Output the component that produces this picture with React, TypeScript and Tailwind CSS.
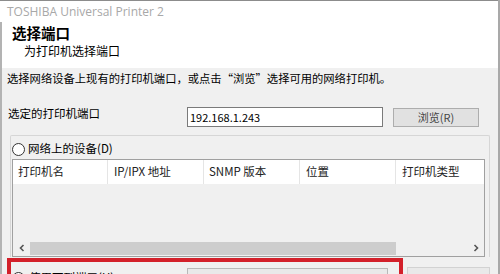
import React from 'react';

const cols = [
  { label: '打印机名', w: 'w-[95px]', pl: 'pl-[5px]' },
  { label: 'IP/IPX 地址', w: 'w-[96px]', pl: 'pl-[6px]' },
  { label: 'SNMP 版本', w: 'w-[96px]', pl: 'pl-[5px]' },
  { label: '位置', w: 'w-[96px]', pl: 'pl-[6px]' },
  { label: '打印机类型', w: 'flex-1', pl: 'pl-[6px]' },
];

const Radio: React.FC<{ checked?: boolean }> = ({ checked }) => (
  <span className="flex h-[13px] w-[13px] shrink-0 items-center justify-center rounded-full border border-[#333] bg-white">
    {checked && <span className="h-[7px] w-[7px] rounded-full bg-[#222]" />}
  </span>
);

const Chevron: React.FC<{ dir: 'left' | 'right' }> = ({ dir }) => (
  <svg width="8" height="8" viewBox="0 0 8 8">
    <path
      d={dir === 'left' ? 'M5.5 1 L2.5 4 L5.5 7' : 'M2.5 1 L5.5 4 L2.5 7'}
      fill="none"
      stroke="#555"
      strokeWidth="1.6"
    />
  </svg>
);

export default function App() {
  return (
    <div className="relative h-[274px] w-[500px] overflow-hidden border-r-2 border-[#a9a9a9] bg-[#f0f0f0] font-['Noto_Sans_CJK_SC',sans-serif] text-[11.5px] text-black">
      {/* title bar */}
      <div className="flex h-[22px] items-center border-t border-[#8c8c8c] bg-white pl-[7px] font-['Open_Sans',sans-serif] text-[12px] text-[#a8a8a8]">
        TOSHIBA Universal Printer 2
      </div>

      <div className="border-l-2 border-[#b3b3b3]">
        {/* header */}
        <div className="h-[46px] bg-white pt-[1px]">
          <div className="pl-[10px] text-[14.5px] font-bold leading-[20px]">选择端口</div>
          <div className="pl-[22px] text-[12px] leading-[16px]">为打印机选择端口</div>
        </div>

        {/* body */}
        <div className="pt-[1px]">
          <div className="pl-[5px] text-[11.3px] leading-[18px]">
            选择网络设备上现有的打印机端口，或点击“浏览”选择可用的网络打印机。
          </div>

          <div className="mt-[20px] flex h-[20px] items-start pl-[6px]">
            <div className="-mt-[2px] w-[179px] leading-[16px]">选定的打印机端口</div>
            <div className="flex h-[20px] w-[196px] items-center border border-[#7a7a7a] bg-white pl-[2px] text-[11px]">
              192.168.1.243
            </div>
            <div className="ml-[10px] mt-[1px] flex h-[19px] w-[86px] items-center justify-center border border-[#adadad] bg-[#e1e1e1] text-[11px] text-[#444]">
              浏览(R)
            </div>
          </div>

          {/* group box */}
          <div className="ml-[8px] mt-[8px] w-[480px] rounded-t-[2px] border border-b-0 border-[#d6d6d6]">
            <div className="flex h-[23px] items-center gap-[3px] pl-[1px] pt-[3px]">
              <Radio />
              <span>网络上的设备(D)</span>
            </div>

            <div className="ml-[1px] flex h-[98px] w-[473px] flex-col border border-[#a0a0a0]">
              <div className="flex h-[24px] bg-white text-[#222]">
                {cols.map((c, i) => (
                  <div
                    key={c.label}
                    className={`${c.w} ${c.pl} flex items-center ${i < cols.length - 1 ? 'border-r border-[#e5e5e5]' : ''}`}
                  >
                    {c.label}
                  </div>
                ))}
              </div>
              <div className="flex-1 bg-[#f0f0f0]" />
              <div className="flex h-[16px] items-center bg-[#f0f0f0]">
                <div className="flex w-[17px] justify-center">
                  <Chevron dir="left" />
                </div>
                <div className="h-[13px] w-[366px] bg-[#cdcdcd]" />
                <div className="flex-1" />
                <div className="flex w-[17px] justify-center">
                  <Chevron dir="right" />
                </div>
              </div>
            </div>
          </div>

          {/* second option row */}
          <div className="mt-[10px] flex h-[22px] items-center pl-[10px]">
            <div className="flex w-[175px] items-center gap-[4px]">
              <Radio checked />
              <span>使用下列端口(U)</span>
            </div>
            <div className="h-[21px] w-[201px] border border-[#b9b9b9] bg-[#e9e9e9]" />
            <div className="ml-[19px] h-[22px] w-[83px] border border-[#d2d2d2] bg-[#e9e9e9]" />
          </div>
        </div>
      </div>

      {/* red annotation */}
      <div className="absolute left-[7px] top-[258px] h-[30px] w-[396px] border-4 border-[#d3202a]" />
    </div>
  );
}
